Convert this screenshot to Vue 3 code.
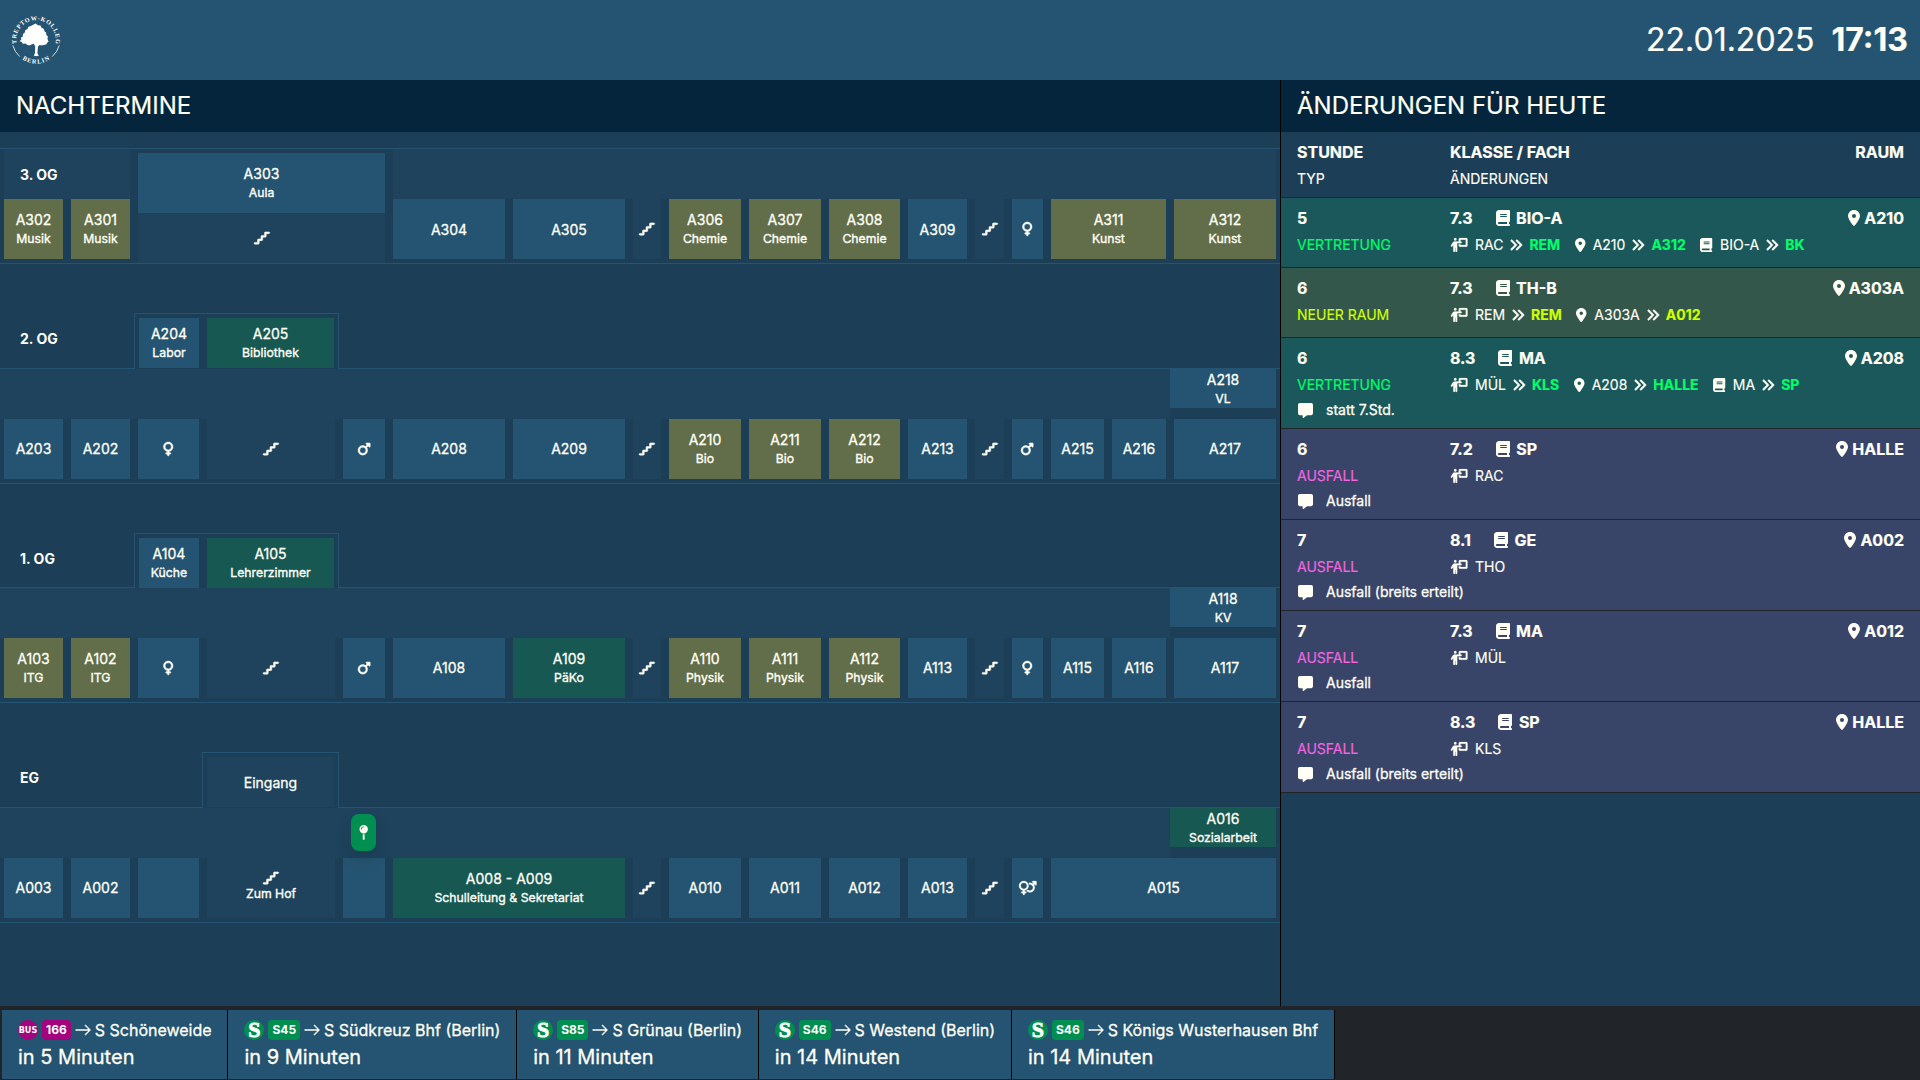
<script setup>
import { h } from 'vue'

const icons = {
  venus: [384, 'M80 176a112 112 0 1 1 224 0A112 112 0 1 1 80 176zM224 349.1c81.9-15 144-86.8 144-173.1C368 78.8 289.2 0 192 0S16 78.8 16 176c0 86.3 62.1 158.1 144 173.1V384H128c-17.7 0-32 14.3-32 32s14.3 32 32 32h32v32c0 17.7 14.3 32 32 32s32-14.3 32-32V448h32c17.7 0 32-14.3 32-32s-14.3-32-32-32H224V349.1z'],
  mars: [448, 'M289.8 46.8c3.7-9 12.5-14.8 22.2-14.8H424c13.3 0 24 10.7 24 24V168c0 9.7-5.8 18.5-14.8 22.2s-19.3 1.7-26.2-5.2l-33.4-33.4L321 204.2c19.5 28.4 31 62.7 31 99.8c0 97.2-78.8 176-176 176S0 401.2 0 304s78.8-176 176-176c37 0 71.4 11.4 99.8 31l52.6-52.6L295 73c-6.9-6.9-8.9-17.2-5.2-26.2zM176 416a112 112 0 1 0 0-224 112 112 0 1 0 0 224z'],
  both: [640, 'M176 288a112 112 0 1 0 0-224 112 112 0 1 0 0 224zM352 176c0 86.3-62.1 158.1-144 173.1V384h32c17.7 0 32 14.3 32 32s-14.3 32-32 32H208v32c0 17.7-14.3 32-32 32s-32-14.3-32-32V448H112c-17.7 0-32-14.3-32-32s14.3-32 32-32h32V349.1C62.1 334.1 0 262.3 0 176C0 78.8 78.8 0 176 0s176 78.8 176 176zM271.9 360.6c19.3-10.1 36.9-23.1 52.1-38.4c20 18.5 46.7 29.8 76.1 29.8c61.9 0 112-50.1 112-112s-50.1-112-112-112c-7.2 0-14.3 .7-21.1 2c-4.9-21.5-13-41.7-24-60.2C369.3 66 384.4 64 400 64c37 0 71.4 11.4 99.8 31l20.6-20.6L487 41c-6.9-6.9-8.9-17.2-5.2-26.2S494.3 0 504 0H616c13.3 0 24 10.7 24 24V136c0 9.7-5.8 18.5-14.8 22.2s-19.3 1.7-26.2-5.2l-33.4-33.4L545 140.2c19.5 28.4 31 62.7 31 99.8c0 97.2-78.8 176-176 176c-50.5 0-96-21.3-128.1-55.4z'],
  stairs: [576, 'M384 64c0-17.7 14.3-32 32-32H544c17.7 0 32 14.3 32 32s-14.3 32-32 32H448v96c0 17.7-14.3 32-32 32H320v96c0 17.7-14.3 32-32 32H192v96c0 17.7-14.3 32-32 32H32c-17.7 0-32-14.3-32-32s14.3-32 32-32h96V320c0-17.7 14.3-32 32-32h96V192c0-17.7 14.3-32 32-32h96V64z'],
  book: [448, 'M96 0C43 0 0 43 0 96V416c0 53 43 96 96 96H384h32c17.7 0 32-14.3 32-32s-14.3-32-32-32V384c17.7 0 32-14.3 32-32V32c0-17.7-14.3-32-32-32H384 96zm0 384H352v64H96c-17.7 0-32-14.3-32-32s14.3-32 32-32zm32-240c0-8.8 7.2-16 16-16H336c8.8 0 16 7.2 16 16s-7.2 16-16 16H144c-8.8 0-16-7.2-16-16zm16 48H336c8.8 0 16 7.2 16 16s-7.2 16-16 16H144c-8.8 0-16-7.2-16-16s7.2-16 16-16z'],
  place: [384, 'M215.7 499.2C267 435 384 279.4 384 192C384 86 298 0 192 0S0 86 0 192c0 87.4 117 243 168.3 307.2c12.3 15.3 35.1 15.3 47.4 0zM192 128a64 64 0 1 1 0 128 64 64 0 1 1 0-128z'],
  angles: [512, 'M470.6 278.6c12.5-12.5 12.5-32.8 0-45.3l-160-160c-12.5-12.5-32.8-12.5-45.3 0s-12.5 32.8 0 45.3L402.7 256 265.4 393.4c-12.5 12.5-12.5 32.8 0 45.3s32.8 12.5 45.3 0l160-160zm-352 160l160-160c12.5-12.5 12.5-32.8 0-45.3l-160-160c-12.5-12.5-32.8-12.5-45.3 0s-12.5 32.8 0 45.3L210.7 256 73.4 393.4c-12.5 12.5-12.5 32.8 0 45.3s32.8 12.5 45.3 0z'],
  message: [512, 'M64 0C28.7 0 0 28.7 0 64V352c0 35.3 28.7 64 64 64h96v80c0 6.1 3.4 11.6 8.8 14.3s11.9 2.1 16.8-1.5L309.3 416H448c35.3 0 64-28.7 64-64V64c0-35.3-28.7-64-64-64H64z'],
  pin: [320, 'M16 144a144 144 0 1 1 288 0A144 144 0 1 1 16 144zM160 80c8.8 0 16-7.2 16-16s-7.2-16-16-16c-53 0-96 43-96 96c0 8.8 7.2 16 16 16s16-7.2 16-16c0-35.3 28.7-64 64-64zM128 480V317.1c10.4 1.9 21.1 2.9 32 2.9s21.6-1 32-2.9V480c0 17.7-14.3 32-32 32s-32-14.3-32-32z'],
  teacher: [640, 'M192 96a48 48 0 1 0 0-96 48 48 0 1 0 0 96zm-8 384V352h16V480c0 17.7 14.3 32 32 32s32-14.3 32-32V192h56 64 16c17.7 0 32-14.3 32-32s-14.3-32-32-32H384V64H576V256H384V224H320v48c0 26.5 21.5 48 48 48H592c26.5 0 48-21.5 48-48V48c0-26.5-21.5-48-48-48H368c-26.5 0-48 21.5-48 48v80H243.1 177.1c-33.7 0-64.9 17.7-82.3 46.6l-58.3 97c-9.1 15.1-4.2 34.8 10.9 43.9s34.8 4.2 43.9-10.9L120 256.9V480c0 17.7 14.3 32 32 32s32-14.3 32-32z'],
}

const heavy = { venus: 14, mars: 14, both: 8, stairs: 18, angles: 18, teacher: 6 }
const Icon = (props) => {
  const [w, d] = icons[props.name]
  const size = Number(props.size || 14)
  return h('svg', {
    viewBox: `0 0 ${w} 512`, width: (w / 512) * size, height: size, class: 'icon',
    fill: 'currentColor', stroke: 'currentColor', 'stroke-width': heavy[props.name] || 0,
  }, [h('path', { d })])
}
Icon.props = ['name', 'size']

// room cells: w = width, n = name, s = subtitle, c = colour variant, i = icon
const stair = (w) => ({ w, i: 'stairs', c: 'hall' })
const floors = [
  {
    id: 'og3', label: '3. OG', top: 16,
    rooms: [
      { w: 59, n: 'A302', s: 'Musik', c: 'olive' }, { w: 59, n: 'A301', s: 'Musik', c: 'olive' },
      { w: 247, hidden: true },
      { w: 112, n: 'A304' }, { w: 112, n: 'A305' }, stair(28),
      { w: 72, n: 'A306', s: 'Chemie', c: 'olive' }, { w: 72, n: 'A307', s: 'Chemie', c: 'olive' }, { w: 71, n: 'A308', s: 'Chemie', c: 'olive' },
      { w: 59, n: 'A309' }, stair(29), { w: 31, i: 'venus' },
      { w: 115, n: 'A311', s: 'Kunst', c: 'olive' }, { w: 102, n: 'A312', s: 'Kunst', c: 'olive' },
    ],
  },
  {
    id: 'og2', label: '2. OG', top: 104, tab: { h: 56, l: 134, rooms: [{ w: 60, n: 'A204', s: 'Labor' }, { w: 127, n: 'A205', s: 'Bibliothek', c: 'green' }] },
    stub: { w: 106, n: 'A218', s: 'VL' },
    rooms: [
      { w: 59, n: 'A203' }, { w: 59, n: 'A202' }, { w: 61, i: 'venus' }, stair(128), { w: 42, i: 'mars' },
      { w: 112, n: 'A208' }, { w: 112, n: 'A209' }, stair(28),
      { w: 72, n: 'A210', s: 'Bio', c: 'olive' }, { w: 72, n: 'A211', s: 'Bio', c: 'olive' }, { w: 71, n: 'A212', s: 'Bio', c: 'olive' },
      { w: 59, n: 'A213' }, stair(29), { w: 31, i: 'mars' }, { w: 53, n: 'A215' }, { w: 54, n: 'A216' }, { w: 102, n: 'A217' },
    ],
  },
  {
    id: 'og1', label: '1. OG', top: 103, tab: { h: 55, l: 134, rooms: [{ w: 60, n: 'A104', s: 'Küche' }, { w: 127, n: 'A105', s: 'Lehrerzimmer', c: 'green' }] },
    stub: { w: 106, n: 'A118', s: 'KV' },
    rooms: [
      { w: 59, n: 'A103', s: 'ITG', c: 'olive' }, { w: 59, n: 'A102', s: 'ITG', c: 'olive' }, { w: 61, i: 'venus' }, stair(128), { w: 42, i: 'mars' },
      { w: 112, n: 'A108' }, { w: 112, n: 'A109', s: 'PäKo', c: 'green' }, stair(28),
      { w: 72, n: 'A110', s: 'Physik', c: 'olive' }, { w: 72, n: 'A111', s: 'Physik', c: 'olive' }, { w: 71, n: 'A112', s: 'Physik', c: 'olive' },
      { w: 59, n: 'A113' }, stair(29), { w: 31, i: 'venus' }, { w: 53, n: 'A115' }, { w: 54, n: 'A116' }, { w: 102, n: 'A117' },
    ],
  },
  {
    id: 'eg', label: 'EG', top: 104, tab: { h: 56, l: 202, rooms: [{ w: 127, n: 'Eingang', c: 'hall' }] },
    stub: { w: 106, n: 'A016', s: 'Sozialarbeit', c: 'green' }, marker: true,
    rooms: [
      { w: 59, n: 'A003' }, { w: 59, n: 'A002' }, { w: 61 }, { w: 128, i: 'stairs', s: 'Zum Hof', c: 'hall' }, { w: 42 },
      { w: 232, n: 'A008 - A009', s: 'Schulleitung & Sekretariat', c: 'green' }, stair(28),
      { w: 72, n: 'A010' }, { w: 72, n: 'A011' }, { w: 71, n: 'A012' },
      { w: 59, n: 'A013' }, stair(29), { w: 31, i: 'both' }, { w: 225, n: 'A015' },
    ],
  },
]

const changes = [
  { hour: '5', type: 'VERTRETUNG', kind: 'swap', cls: '7.3', subj: 'BIO-A', room: 'A210', ch: [['teacher', 'RAC', 'REM'], ['place', 'A210', 'A312'], ['book', 'BIO-A', 'BK']] },
  { hour: '6', type: 'NEUER RAUM', kind: 'move', cls: '7.3', subj: 'TH-B', room: 'A303A', ch: [['teacher', 'REM', 'REM'], ['place', 'A303A', 'A012']] },
  { hour: '6', type: 'VERTRETUNG', kind: 'swap', cls: '8.3', subj: 'MA', room: 'A208', ch: [['teacher', 'MÜL', 'KLS'], ['place', 'A208', 'HALLE'], ['book', 'MA', 'SP']], note: 'statt 7.Std.' },
  { hour: '6', type: 'AUSFALL', kind: 'off', cls: '7.2', subj: 'SP', room: 'HALLE', ch: [['teacher', 'RAC']], note: 'Ausfall' },
  { hour: '7', type: 'AUSFALL', kind: 'off', cls: '8.1', subj: 'GE', room: 'A002', ch: [['teacher', 'THO']], note: 'Ausfall (breits erteilt)' },
  { hour: '7', type: 'AUSFALL', kind: 'off', cls: '7.3', subj: 'MA', room: 'A012', ch: [['teacher', 'MÜL']], note: 'Ausfall' },
  { hour: '7', type: 'AUSFALL', kind: 'off', cls: '8.3', subj: 'SP', room: 'HALLE', ch: [['teacher', 'KLS']], note: 'Ausfall (breits erteilt)' },
]

const departures = [
  { line: '166', bus: true, to: 'S Schöneweide', min: 5 },
  { line: 'S45', to: 'S Südkreuz Bhf (Berlin)', min: 9 },
  { line: 'S85', to: 'S Grünau (Berlin)', min: 11 },
  { line: 'S46', to: 'S Westend (Berlin)', min: 14 },
  { line: 'S46', to: 'S Königs Wusterhausen Bhf', min: 14 },
]
</script>

<template>
  <div class="screen">
    <header class="topbar">
      <svg class="logo" viewBox="0 0 50 50" width="50" height="50">
        <defs>
          <path id="ring-top" d="M5.6 29A19.8 19.8 0 1 1 44.4 29" />
          <path id="ring-bottom" d="M9.3 42.7A23.8 23.8 0 0 0 40.7 42.7" />
        </defs>
        <text class="ring"><textPath href="#ring-top" startOffset="50%" text-anchor="middle" textLength="69">TREPTOW-KOLLEG</textPath></text>
        <text class="ring"><textPath href="#ring-bottom" startOffset="50%" text-anchor="middle" textLength="29">BERLIN</textPath></text>
        <path d="M1.8 30.5Q3.6 37 8.8 41.6M48.2 30.5Q46.4 37 41.2 41.6" fill="none" stroke="#fff" stroke-width=".8" />
        <path fill="#fff" d="M22.6 9.6l2.2-1 2 1.6 2.6.4 1.2 2.2 2.4 1.2.4 2.2 1.8 1.6v2l1.8 2-.6 2 1.2 2.6-1.6 1.6-.8 1.6-2.8.4-1.6.6-2.2-.6-1.6 1.4-.6 6.8 1.4 2.6-2.4.4-2.6-.4 1.2-2.8.2-6.6-1.4-2.6-2.4.6-1.8 1-2.6-.6-1.4-1.2-2.8.2-1-1.8-2.2-.8 1.8-1.8-.6-1.6 2-1.4.2-2.4 1.8-1.4.4-2.4 2.2-1.2 1-2.2 2-.6z" />
      </svg>
      <div class="clock"><span>22.01.2025</span><b>17:13</b></div>
    </header>

    <main class="content">
      <section class="plan">
        <h2>NACHTERMINE</h2>
        <template v-for="f in floors" :key="f.id">
          <div class="above" :class="f.id" :style="{ height: f.top + 'px' }">
            <b v-if="f.tab" class="label">{{ f.label }}</b>
            <div v-if="f.tab" class="tab" :style="{ height: f.tab.h + 'px', width: 339 - f.tab.l + 'px' }">
              <div v-for="r in f.tab.rooms" :key="r.n" class="room" :class="r.c" :style="{ width: r.w + 'px' }">
                <span class="name">{{ r.n }}</span><span v-if="r.s" class="desc">{{ r.s }}</span>
              </div>
            </div>
          </div>
          <div class="floor">
            <div v-if="f.id === 'og3'" class="corridor split">
              <div class="hall first"><b>{{ f.label }}</b></div>
              <div class="aula">
                <div class="room"><span class="name">A303</span><span class="desc">Aula</span></div>
                <div class="room hall"><Icon name="stairs" /></div>
              </div>
              <div class="hall rest"></div>
            </div>
            <div v-else class="corridor">
              <div class="hall rest"></div>
              <div class="room stub" :class="f.stub.c" :style="{ width: f.stub.w + 'px' }">
                <span class="name">{{ f.stub.n }}</span><span class="desc">{{ f.stub.s }}</span>
              </div>
              <div v-if="f.marker" class="marker"><Icon name="pin" size="15" /></div>
            </div>
            <div class="rooms">
              <div v-for="(r, k) in f.rooms" :key="k" class="room" :class="[r.c, { hidden: r.hidden, lifted: r.i && r.s, low: f.id === 'og3' && r.n && !r.s }]" :style="{ width: r.w + 'px' }">
                <Icon v-if="r.i" :name="r.i" />
                <span v-if="r.n" class="name">{{ r.n }}</span>
                <span v-if="r.s" class="desc">{{ r.s }}</span>
              </div>
            </div>
          </div>
        </template>
      </section>

      <section class="changes">
        <h2>ÄNDERUNGEN FÜR HEUTE</h2>
        <div class="row head">
          <div class="cols main"><span>STUNDE</span><span>KLASSE / FACH</span><span class="end">RAUM</span></div>
          <div class="cols detail"><span>TYP</span><span>ÄNDERUNGEN</span></div>
        </div>
        <div v-for="(c, k) in changes" :key="k" class="row" :class="c.kind">
          <div class="cols main">
            <span>{{ c.hour }}</span>
            <span class="klass"><span>{{ c.cls }}</span><Icon name="book" size="16" /><span>{{ c.subj }}</span></span>
            <span class="end place"><Icon name="place" size="16" />{{ c.room }}</span>
          </div>
          <div class="cols detail">
            <span class="type">{{ c.type }}</span>
            <span class="list">
              <span v-for="(x, j) in c.ch" :key="j" class="change">
                <Icon :name="x[0]" /><span>{{ x[1] }}</span>
                <template v-if="x[2]"><Icon name="angles" /><b>{{ x[2] }}</b></template>
              </span>
            </span>
          </div>
          <div v-if="c.note" class="note"><Icon name="message" size="15" />{{ c.note }}</div>
        </div>
      </section>
    </main>

    <footer class="departures">
      <div v-for="(d, k) in departures" :key="k" class="dep">
        <div class="line">
          <span class="mode" :class="{ bus: d.bus }">{{ d.bus ? 'BUS' : 'S' }}</span>
          <span class="badge" :class="{ bus: d.bus }">{{ d.line }}</span>
          <svg class="arrow" viewBox="0 0 16 12" width="16" height="12"><path d="M.5 6H15M10 1l5 5-5 5" fill="none" stroke="currentColor" stroke-width="1.3" /></svg>
          <span class="to">{{ d.to }}</span>
        </div>
        <div class="in">in {{ d.min }} Minuten</div>
      </div>
    </footer>
  </div>
</template>

<style>
html, body { margin: 0; background: #212529; }
</style>

<style scoped>
.screen { width: 1920px; height: 1080px; display: flex; flex-direction: column; overflow: hidden; background: #212529; color: #fffff5; font-family: Inter, "Liberation Sans", sans-serif; font-size: 14px; }
.icon { display: block; flex: none; overflow: visible; }
.topbar { height: 80px; background: #255472; display: flex; align-items: center; justify-content: space-between; padding: 0 12px 0 11px; box-sizing: border-box; flex: none; }
.ring { font: bold 6.2px "Liberation Serif", serif; fill: #fff; }
.clock { display: flex; gap: 17px; font-size: 32px; line-height: 40px; -webkit-text-stroke: .2px; }
.content { height: 926px; display: flex; flex: none; }
h2 { margin: 0; height: 52px; line-height: 51px; padding-left: 16px; font-size: 24px; font-weight: 400; background: #04253b; flex: none; -webkit-text-stroke: .2px; }
.plan { width: 1280px; background: #1d3e57; display: flex; flex-direction: column; }
.above { flex: none; display: flex; align-items: flex-end; justify-content: space-between; box-sizing: border-box; width: 339px; }
.label { padding-left: 20px; line-height: 20px; margin-bottom: 19px; }
.og1 .label { margin-bottom: 18px; }
.tab { position: relative; box-sizing: border-box; border: 1px solid #255472; border-bottom: 0; background: #1d3e57; margin-bottom: -1px; padding: 4px 4px 0; display: flex; justify-content: flex-end; gap: 8px; z-index: 1; }
.tab .room { height: 50px; }
.floor { flex: none; height: 116px; box-sizing: border-box; border: solid #255472; border-width: 1px 0; }
.corridor { height: 50px; display: flex; position: relative; }
.hall { background: #1f435d; }
.rest { flex: 1; }
.split { padding: 0 4px; gap: 8px; }
.first { width: 110px; padding-left: 16px; line-height: 52px; }
.aula { width: 247px; padding-top: 4px; position: relative; }
.aula .room { height: 60px; }
.aula .room.hall { height: 50px; }
.rooms { height: 60px; display: flex; gap: 8px; padding-left: 4px; }
.room { background: #255472; display: flex; flex-direction: column; align-items: center; justify-content: center; white-space: nowrap; flex: none; box-sizing: border-box; padding-bottom: 1px; }
.room.olive { background: #626e49; }
.room.green { background: #175853; }
.room.hall { background: #1f435d; }
.room.hidden { visibility: hidden; }
.room.lifted { padding-bottom: 3px; }
.room.low { padding-bottom: 0; }
.tab .room.hall { padding-bottom: 0; }
.name { line-height: 21px; -webkit-text-stroke: .3px; }
.desc { font-size: 12.25px; line-height: 18px; -webkit-text-stroke: .35px; }
.room.stub { height: 39px; margin-right: 4px; padding-bottom: 0; }
.marker { position: absolute; left: 351px; top: 6px; width: 25px; height: 37px; border-radius: 8px; background: #008f50; box-shadow: 0 8px 16px rgba(0, 0, 0, .15); display: flex; align-items: center; justify-content: center; }
.changes { flex: 1; background: #1d3e57; border-left: 1px solid #000; }
.row { padding: 8px 16px 7px; border-bottom: 1px solid #212529; }
.row.head { height: 50px; }
.row.swap, .row.move { min-height: 54px; }
.row.swap { background: #1a585b; }
.row.move { background: #34574c; }
.row.off { background: #394568; }
.cols { display: flex; }
.cols > span:first-child { width: 153px; flex: none; }
.end { margin-left: auto; }
.main { font-size: 16px; line-height: 24px; font-weight: 700; -webkit-text-stroke: .2px; }
.klass { display: flex; align-items: center; }
.klass svg { margin: 0 6.5px 0 23px; }
.place { display: flex; align-items: center; gap: 4px; }
.detail { margin-top: 4px; line-height: 22px; -webkit-text-stroke: .15px; }
.swap .type, .swap b { color: #00ff6a; }
.move .type, .move b { color: #d0ff00; }
.off .type { color: #f564e0; }
.list { display: flex; gap: 14.5px; }
.change { display: flex; align-items: center; gap: 6px; }
.change svg:first-child { margin-right: 1.5px; }
.note { display: flex; align-items: center; gap: 13px; line-height: 22px; margin-top: 3px; padding-left: 1px; -webkit-text-stroke: .3px; }
.departures { flex: 1; display: flex; padding: 4px 0 1px 2px; }
.dep { background: #255472; border-right: 1px solid #000; padding: 9px 15.8px 0 16px; }
.line { display: flex; align-items: center; height: 22px; white-space: nowrap; }
.mode { width: 20px; height: 20px; border-radius: 50%; background: #008f50; font: bold 22px/20px "Liberation Serif", serif; text-align: center; color: #fff; -webkit-text-stroke: .8px #fff; }
.mode.bus { background: #a5027d; font: bold 9px/20px "Liberation Sans Narrow", "DejaVu Sans Condensed", sans-serif; -webkit-text-stroke: 0; }
.badge { height: 20px; line-height: 20px; margin: 0 4px; padding: 0 4px; border-radius: 4px; background: #008f50; font-size: 12px; font-weight: 700; color: #fff; }
.badge.bus { background: #a5027d; }
.arrow { margin-right: 4px; flex: none; }
.to { font-size: 16px; -webkit-text-stroke: .3px; }
.in { font-size: 20px; line-height: 31px; margin-top: .5px; -webkit-text-stroke: .3px; }
</style>
